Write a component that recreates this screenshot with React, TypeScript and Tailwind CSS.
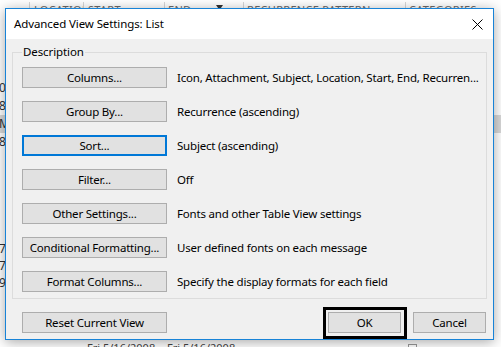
import React from "react";

const rows: { label: string; desc: string; focus?: boolean }[] = [
  { label: "Columns...", desc: "Icon, Attachment, Subject, Location, Start, End, Recurren..." },
  { label: "Group By...", desc: "Recurrence (ascending)" },
  { label: "Sort...", desc: "Subject (ascending)", focus: true },
  { label: "Filter...", desc: "Off" },
  { label: "Other Settings...", desc: "Fonts and other Table View settings" },
  { label: "Conditional Formatting...", desc: "User defined fonts on each message" },
  { label: "Format Columns...", desc: "Specify the display formats for each field" },
];

function Btn({ children, focus, w = "w-[145px]" }: { children: React.ReactNode; focus?: boolean; w?: string }) {
  return (
    <div
      className={
        (focus ? "border-2 border-[#0078d7] " : "border border-[#adadad] ") +
        w +
        " h-[21px] shrink-0 bg-[#e1e1e1] flex items-center justify-center text-[11.5px] tracking-[-0.2px] text-black leading-none"
      }
    >
      {children}
    </div>
  );
}

export default function App() {
  return (
    <div className="relative w-[501px] h-[347px] overflow-hidden bg-white font-['Noto_Sans',sans-serif] text-black">
      {/* background list view */}
      <div className="flex flex-col">
        <div className="h-[20px] flex text-[11px] leading-[13px] text-[#6a6a6a] tracking-[0.3px]">
          <div className="w-[29px]" />
          <div className="w-[54px] border-l border-[#d6d6d6] mt-[2px] pl-[4px] pt-[1px] overflow-hidden whitespace-nowrap">LOCATION</div>
          <div className="w-[81px] border-l border-[#d6d6d6] mt-[2px] pl-[4px] pt-[1px] whitespace-nowrap">START</div>
          <div className="w-[79px] border-l border-[#d6d6d6] mt-[2px] pl-[3px] pt-[1px] flex items-start whitespace-nowrap">
            <span>END</span>
            <svg width="7" height="5" viewBox="0 0 7 5" className="ml-auto mr-[20px] mt-[2px]">
              <path d="M0 0H7L3.5 5Z" fill="#333" />
            </svg>
          </div>
          <div className="w-[162px] border-l border-[#d6d6d6] mt-[2px] pl-[3px] pt-[1px] whitespace-nowrap">RECURRENCE PATTERN</div>
          <div className="flex-1 border-l border-[#d6d6d6] mt-[2px] pl-[3px] pt-[1px] whitespace-nowrap">CATEGORIES</div>
        </div>
        <div className="h-[59px]" />
        {["0", "8", "M", "8"].map((t, i) => (
          <div key={i} className={"h-[18px] flex items-center text-[12px] text-[#333] " + (i === 2 ? "bg-[#d9d9d9]" : "")}>
            <span className="-ml-[1px]">{t}</span>
          </div>
        ))}
        <div className="h-[89px]" />
        {["7(", "7(", "9"].map((t, i) => (
          <div key={i} className="h-[17px] flex items-center text-[12px] text-[#333]">
            <span className="-ml-[1px]">{t}</span>
          </div>
        ))}
        <div className="h-[48px]" />
        <div className="h-[18px] flex items-center text-[11px] text-[#444]">
          <div className="w-[87px]" />
          <div className="w-[80px] overflow-hidden whitespace-nowrap">Fri 5/16/2008</div>
          <div className="w-[241px] overflow-hidden whitespace-nowrap">Fri 5/16/2008</div>
          <div className="w-[9px] h-[9px] border border-[#999] self-start mt-[5px]" />
        </div>
      </div>

      {/* dialog */}
      <div className="absolute left-[5px] top-[8px] w-[489px] h-[332px] border border-[#1883d7] bg-[#f0f0f0] shadow-[0_2px_12px_rgba(0,0,0,0.35)] flex flex-col">
        <div className="h-[30px] shrink-0 bg-white flex items-center justify-between pl-[8px] pr-[10px]">
          <span className="text-[11.5px] tracking-[-0.1px] leading-none">Advanced View Settings: List</span>
          <svg width="11" height="11" viewBox="0 0 11 11">
            <path d="M0.5 0.5L10.5 10.5M10.5 0.5L0.5 10.5" stroke="#000" strokeWidth="1" />
          </svg>
        </div>
        <div className="flex-1 flex flex-col pl-[6px] pr-[6px] pt-[13px]">
          <div className="relative border border-[#dcdcdc] pl-[9px] pt-[14px] pb-[6px] flex flex-col gap-[13px]">
            <span className="absolute left-[9px] -top-[9px] bg-[#f0f0f0] px-[1px] text-[11.5px] tracking-[-0.1px] leading-[16px]">Description</span>
            {rows.map((r) => (
              <div key={r.label} className="flex items-center">
                <Btn focus={r.focus}>{r.label}</Btn>
                <span className="ml-[10px] text-[11.5px] tracking-[-0.2px] whitespace-nowrap">{r.desc}</span>
              </div>
            ))}
          </div>
          <div className="flex items-start justify-between mt-[8px] pl-[10px] pr-[1px]">
            <div className="mt-[5px]">
              <Btn>Reset Current View</Btn>
            </div>
            <div className="flex items-start">
              <div className="border-[3px] border-black pt-[2px] pb-[3px] pl-[2px] pr-[3px]">
                <Btn w="w-[73px]">OK</Btn>
              </div>
              <div className="mt-[5px] ml-[6px]">
                <Btn w="w-[73px]">Cancel</Btn>
              </div>
            </div>
          </div>
        </div>
      </div>
    </div>
  );
}
